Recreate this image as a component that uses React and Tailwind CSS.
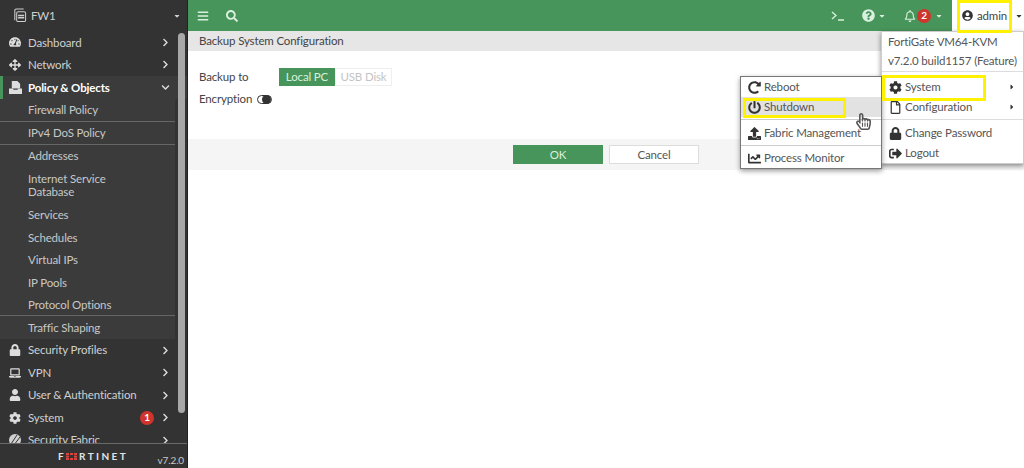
import {
  FaTachometerAlt, FaArrowsAlt, FaChevronRight, FaChevronDown, FaLock, FaLaptop, FaUser, FaCog,
  FaBars, FaSearch, FaQuestionCircle, FaRegBell, FaUserCircle, FaRegFile, FaSignOutAlt, FaRedoAlt,
  FaPowerOff, FaUpload, FaChartLine, FaRegHandPointer, FaCaretDown, FaCaretRight,
} from "react-icons/fa";

function PolicyIcon() {
  return (
    <svg viewBox="0 0 14 14" className="h-[13px] w-[13px]" fill="currentColor">
      <path d="M3 0h6l3 3v5H3z" />
      <path d="M0 8h4l1 1.5h4L10 8h4v6H0z" />
    </svg>
  );
}

function FabricIcon() {
  return (
    <svg viewBox="0 0 12 12" className="h-[12px] w-[12px]" fill="none">
      <circle cx="6" cy="6" r="6" fill="#cfcfcf" />
      <path d="M2 10 8 1M5 11l6-8" stroke="#333333" strokeWidth="1" />
    </svg>
  );
}

function NavRow({ icon, label, open, active, badge }) {
  return (
    <div className={"flex h-[22.5px] shrink-0 items-center pr-[17px] text-[11.5px] " + (active ? "bg-[#3b3b3b] font-bold text-white" : "text-[#d0d0d0]")}>
      <div className="flex h-full w-[9px] shrink-0">
        {active && <div className="h-full w-[3px] bg-[#48955b]" />}
      </div>
      <div className="flex w-[19px] shrink-0 justify-start text-[12px] text-[#dddddd]">{icon}</div>
      <span className="flex-1 whitespace-nowrap">{label}</span>
      {badge && (
        <span className="mr-[7px] flex h-[14px] w-[14px] items-center justify-center rounded-full bg-[#d0342c] text-[10px] font-bold text-white">
          {badge}
        </span>
      )}
      {open ? <FaChevronDown className="text-[9px] text-[#dddddd]" /> : <FaChevronRight className="text-[9px] text-[#dddddd]" />}
    </div>
  );
}

function SubRow({ label, line, tall, first }) {
  return (
    <div className={"mr-[12px] flex shrink-0 items-center bg-[#3b3b3b] pl-[28px] text-[11.5px] leading-[13px] text-[#c8c8c8] " + (tall ? "h-[36px] " : first ? "h-[23.6px] " : "h-[22.6px] ") + (line ? "border-b border-[#666666]" : "")}>
      <span className="w-[100px] whitespace-normal">{label}</span>
    </div>
  );
}

function MenuItem({ icon, label, arrow, hover }) {
  return (
    <div className={"flex h-[20px] items-center pl-[7px] pr-[7px] text-[11.5px] text-[#555555] " + (hover ? "bg-[#e2e2e2]" : "")}>
      <span className="flex w-[16px] shrink-0 text-[13px] text-[#333333]">{icon}</span>
      <span className="flex-1 whitespace-nowrap">{label}</span>
      {arrow && <FaCaretRight className="text-[8px] text-[#333333]" />}
    </div>
  );
}

export default function App() {
  return (
    <div className="relative flex h-[468px] w-[1024px] overflow-hidden bg-white font-['Lato',sans-serif] tracking-[-0.15px] text-[#555555]">
      {/* SIDEBAR */}
      <aside className="relative flex h-full w-[188px] shrink-0 flex-col border-r border-[#222222] bg-[#333333]">
        <div className="flex h-[31px] shrink-0 items-center pl-[12px] pr-[6px] text-[11.5px] text-[#cfcfcf]">
          <svg viewBox="0 0 15 16" className="mr-[4px] h-[15px] w-[15px]" fill="none" stroke="#cfcfcf" strokeWidth="1.1">
            <path d="M2.5 13V2.5a1.5 1.5 0 0 1 1.5-1.5h8" />
            <rect x="4.5" y="4" width="9.5" height="10.5" rx="1.5" />
            <path d="M6 8h6.5M6 10.5h6.5" strokeWidth="1.6" />
          </svg>
          <span className="flex-1">FW1</span>
          <FaCaretDown className="text-[8px]" />
        </div>
        <div className="flex min-h-0 flex-1 flex-col overflow-hidden">
          <NavRow icon={<FaTachometerAlt />} label="Dashboard" />
          <NavRow icon={<FaArrowsAlt />} label="Network" />
          <NavRow icon={<PolicyIcon />} label="Policy & Objects" active open />
          <SubRow label="Firewall Policy" line first />
          <SubRow label="IPv4 DoS Policy" line />
          <SubRow label="Addresses" />
          <SubRow label="Internet Service Database" tall />
          <SubRow label="Services" />
          <SubRow label="Schedules" />
          <SubRow label="Virtual IPs" />
          <SubRow label="IP Pools" />
          <SubRow label="Protocol Options" line />
          <SubRow label="Traffic Shaping" />
          <NavRow icon={<FaLock />} label="Security Profiles" />
          <NavRow icon={<FaLaptop />} label="VPN" />
          <NavRow icon={<FaUser />} label="User & Authentication" />
          <NavRow icon={<FaCog />} label="System" badge="1" />
          <NavRow icon={<FabricIcon />} label="Security Fabric" />
        </div>
        <div className="flex h-[25px] shrink-0 items-center border-t border-[#6a6a6a] bg-[#333333] pl-[58px] pr-[3px]">
          <span className="flex flex-1 items-center text-[10px] font-bold tracking-[2.4px] text-[#e4e4e4]">
            F
            <svg viewBox="0 0 11 7" className="mr-[2px] h-[7px] w-[11px]" fill="#d9453c">
              <rect x="0" y="0" width="3" height="2" />
              <rect x="4" y="0" width="3" height="2" />
              <rect x="8" y="0" width="3" height="2" />
              <rect x="0" y="2.6" width="3" height="2" />
              <rect x="8" y="2.6" width="3" height="2" />
              <rect x="0" y="5" width="3" height="2" />
              <rect x="4" y="5" width="3" height="2" />
              <rect x="8" y="5" width="3" height="2" />
            </svg>
            RTINET
          </span>
          <span className="pt-[9px] text-[10px] text-[#c8c8c8]">v7.2.0</span>
        </div>
        <div className="absolute left-[178px] top-[33px] h-[380px] w-[7px] rounded-[4px] bg-[#a8a8a8]" />
      </aside>

      {/* MAIN */}
      <div className="flex min-w-0 flex-1 flex-col">
        <header className="flex h-[31px] shrink-0 items-center bg-[#48955b] pl-[9px] text-[#d8f0dd]">
          <FaBars className="text-[12px]" />
          <FaSearch className="ml-[17px] text-[12px]" />
          <div className="flex-1" />
          <svg viewBox="0 0 13 10" className="h-[10px] w-[13px]" fill="none" stroke="#d8f0dd" strokeWidth="1.3">
            <path d="M1 1l4 3.5L1 8M7 9h6" />
          </svg>
          <FaQuestionCircle className="ml-[18px] text-[13px]" />
          <FaCaretDown className="ml-[3px] text-[8px]" />
          <FaRegBell className="ml-[18px] text-[12px]" />
          <span className="ml-[1px] flex h-[14px] w-[14px] items-center justify-center rounded-full bg-[#d0342c] text-[10px] font-bold text-white">2</span>
          <FaCaretDown className="ml-[4px] text-[8px]" />
          <div className="ml-[9px] flex h-full w-[72px] items-center bg-white pl-[10px] text-[11.5px] text-[#444444]">
            <FaUserCircle className="mr-[4px] text-[11px] text-[#333333]" />
            admin
            <FaCaretDown className="ml-[8px] text-[8px] text-[#333333]" />
          </div>
        </header>

        <div className="flex h-[20px] shrink-0 items-center bg-[#e6e6e6] pl-[11px] text-[11.5px] text-[#444444]">
          Backup System Configuration
        </div>

        <div className="flex h-[88px] shrink-0 flex-col pl-[11px] pt-[16px] text-[11.5px] text-[#444444]">
          <div className="flex h-[20px] items-center">
            <span className="w-[80px]">Backup to</span>
            <span className="flex h-[18px] w-[56px] items-center justify-center bg-[#48955b] text-[#d8f0dd]">Local PC</span>
            <span className="flex h-[18px] w-[57px] items-center justify-center border border-[#eeeeee] text-[#c4c4c4]">USB Disk</span>
          </div>
          <div className="mt-[1px] flex h-[22px] items-center">
            <span>Encryption</span>
            <span className="ml-[5px] flex h-[9px] w-[15px] items-center justify-end rounded-full border border-[#333333] bg-white">
              <span className="h-[9px] w-[9px] rounded-full bg-[#333333]" />
            </span>
          </div>
        </div>

        <div className="flex h-[31px] shrink-0 items-center bg-[#f5f5f5] pl-[325px] text-[11.5px]">
          <button className="flex h-[19px] w-[90px] items-center justify-center bg-[#48955b] text-[#d8f0dd]">OK</button>
          <button className="ml-[6px] flex h-[19px] w-[90px] items-center justify-center border border-[#dddddd] bg-white text-[#555555]">Cancel</button>
        </div>
      </div>

      {/* ADMIN DROPDOWN */}
      <div className="absolute left-[881px] top-[31px] w-[143px] border border-[#cccccc] bg-white shadow-[0_2px_5px_rgba(0,0,0,0.45)]">
        <div className="flex h-[19px] items-center whitespace-nowrap pl-[6px] text-[11.5px] text-[#555555]">FortiGate VM64-KVM</div>
        <div className="flex h-[21px] items-center whitespace-nowrap border-b border-[#dddddd] pl-[6px] text-[11.5px] text-[#555555]">v7.2.0 build1157 (Feature)</div>
        <div className="pb-[2px] pt-[5px]">
          <MenuItem icon={<FaCog />} label="System" arrow />
          <MenuItem icon={<FaRegFile />} label="Configuration" arrow />
        </div>
        <div className="border-t border-[#dddddd] pt-[3px]">
          <MenuItem icon={<FaLock />} label="Change Password" />
          <MenuItem icon={<FaSignOutAlt />} label="Logout" />
        </div>
      </div>

      {/* SYSTEM SUBMENU */}
      <div className="absolute left-[740px] top-[76px] w-[142px] border border-[#777777] bg-white shadow-[0_2px_5px_rgba(0,0,0,0.4)]">
        <MenuItem icon={<FaRedoAlt />} label="Reboot" />
        <MenuItem icon={<FaPowerOff />} label="Shutdown" hover />
        <div className="mt-[2px] border-t border-[#cccccc] pb-[2px] pt-[3px]">
          <MenuItem icon={<FaUpload />} label="Fabric Management" />
        </div>
        <div className="border-t border-[#cccccc] pt-[2px]">
          <MenuItem icon={<FaChartLine />} label="Process Monitor" />
        </div>
      </div>

      {/* CURSOR */}
      <FaRegHandPointer className="absolute left-[855px] top-[113px] text-[17px] text-[#555555]" />

      {/* YELLOW CALLOUTS */}
      <div className="absolute left-[957px] top-0 h-[33px] w-[55px] border-[3px] border-[#fff200]" />
      <div className="absolute left-[882px] top-[75px] h-[26px] w-[104px] border-[3px] border-[#fff200]" />
      <div className="absolute left-[743px] top-[98px] h-[20px] w-[103px] border-[3px] border-[#fff200]" />
    </div>
  );
}
